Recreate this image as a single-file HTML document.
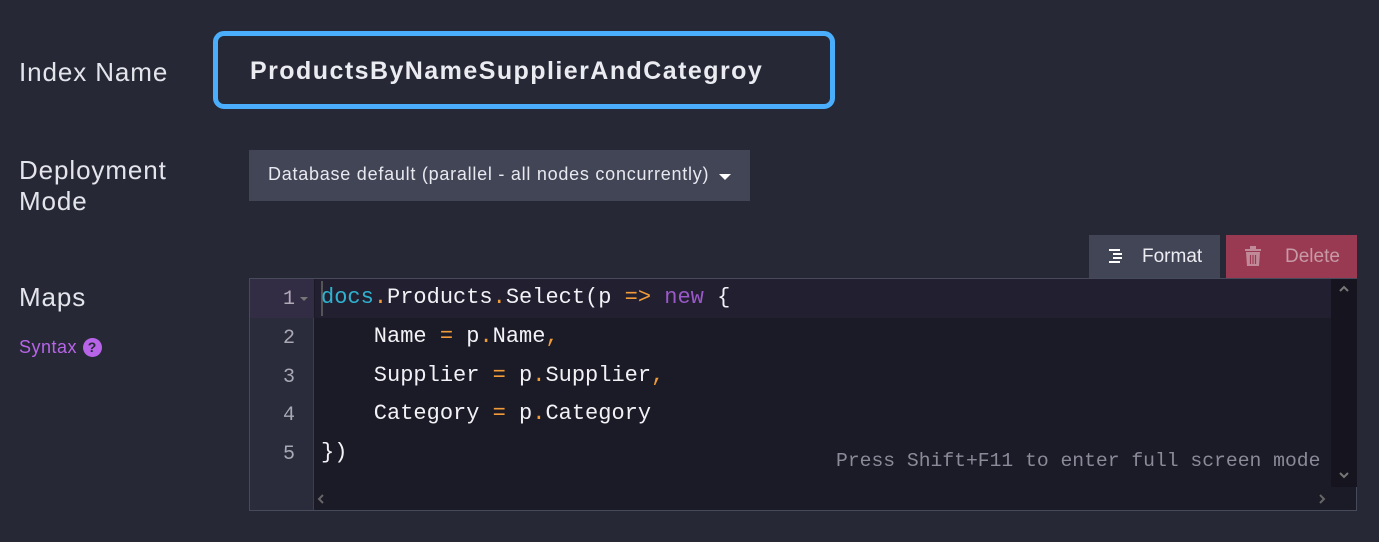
<!DOCTYPE html>
<html><head><meta charset="utf-8"><style>
*{margin:0;padding:0;box-sizing:border-box}
body{width:1379px;height:542px;background:#262935;position:relative;overflow:hidden;font-family:"Liberation Sans",sans-serif;color:#e6e6ee}
.abs{position:absolute;white-space:nowrap}
.lbl{font-size:26px;color:#e4e4ec;letter-spacing:0.9px}
.inp{left:213px;top:31px;width:622px;height:78px;border:5px solid #4aaefc;border-radius:11px;background:#262935}
.inp span{position:absolute;left:32px;top:21px;font-size:25px;font-weight:bold;color:#ebebf2;letter-spacing:1.45px}
.dd{left:249px;top:150px;width:501px;height:51px;background:#424555;font-size:18px;color:#e8e8f0;padding:14px 0 0 19px;letter-spacing:0.75px}
.tri{position:absolute;left:470px;top:24px;width:0;height:0;border-left:6px solid transparent;border-right:6px solid transparent;border-top:6px solid #fff}
.btn{top:235px;height:43px;font-size:19px;padding-top:11px}
.ed{left:249px;top:278px;width:1108px;height:233px;background:#1b1a27;border:1px solid #474a5a}
.gut{position:absolute;left:0;top:0;width:64px;height:100%;background:#2a2b3b;border-right:1px solid #3d3f50}
.ln{position:absolute;left:0;width:45px;text-align:right;font-family:"Liberation Mono",monospace;font-size:20px;color:#a9a9b6}
.code{position:absolute;left:71px;font-family:"Liberation Mono",monospace;font-size:22px;color:#f2f2f6;white-space:pre}
.c{color:#2fb2d0}.o{color:#f19c38}.k{color:#9a58c8}
</style></head><body>
<div class="abs lbl" style="left:19px;top:57px">Index Name</div>
<div class="abs inp"><span>ProductsByNameSupplierAndCategroy</span></div>
<div class="abs lbl" style="left:19px;top:155px;line-height:31px">Deployment<br>Mode</div>
<div class="abs dd">Database default (parallel - all nodes concurrently)<div class="tri"></div></div>
<div class="abs lbl" style="left:19px;top:282px">Maps</div>
<div class="abs" style="left:19px;top:337px;font-size:18px;color:#b764e8;letter-spacing:0.5px">Syntax <span style="display:inline-block;width:19px;height:19px;border-radius:50%;background:#b764e8;color:#262935;font-size:14px;font-weight:bold;text-align:center;line-height:19px;vertical-align:1px;letter-spacing:0">?</span></div>
<div class="abs btn" style="left:1089px;width:131px;background:#424555;color:#ececf2">
 <svg style="position:absolute;left:19px;top:13px" width="16" height="16" viewBox="0 0 16 16"><g stroke="#fff" stroke-width="2"><line x1="1" y1="2" x2="12" y2="2"/><line x1="5" y1="6" x2="14" y2="6"/><line x1="5" y1="10" x2="14" y2="10"/><line x1="1" y1="14" x2="12" y2="14"/></g></svg>
 <span style="position:absolute;left:53px">Format</span></div>
<div class="abs btn" style="left:1226px;width:131px;background:#9a3a52;color:#c79aa6">
 <svg style="position:absolute;left:19px;top:11px" width="16" height="20" viewBox="0 0 16 20"><g fill="#c08a98"><rect x="0" y="3" width="16" height="2"/><rect x="5" y="0" width="6" height="3"/><path d="M1 6h14l-1 14H2z"/></g><g stroke="#9a3a52" stroke-width="1.2"><line x1="5.5" y1="9" x2="5.5" y2="18"/><line x1="8" y1="9" x2="8" y2="18"/><line x1="10.5" y1="9" x2="10.5" y2="18"/></g></svg>
 <span style="position:absolute;left:59px">Delete</span></div>
<div class="abs ed">
 <div class="gut"><div style="position:absolute;left:0;top:0;width:64px;height:39px;background:#332c45"></div></div>
 <div style="position:absolute;left:65px;top:0;width:1016px;height:39px;background:#211f30"></div>
 <div style="position:absolute;left:71px;top:2px;width:2px;height:35px;background:#555"></div>
 <div class="ln" style="top:9px;color:#b0aab8">1</div><div class="abs" style="left:50px;top:18px;border-left:4px solid transparent;border-right:4px solid transparent;border-top:4px solid #777"></div>
 <div class="ln" style="top:48px">2</div>
 <div class="ln" style="top:87px">3</div>
 <div class="ln" style="top:125px">4</div>
 <div class="ln" style="top:164px">5</div>
 <div class="code" style="top:6px"><span class="c">docs</span><span class="o">.</span>Products<span class="o">.</span>Select(p <span class="o">=&gt;</span> <span class="k">new</span> {</div>
 <div class="code" style="top:45px">    Name <span class="o">=</span> p<span class="o">.</span>Name<span class="o">,</span></div>
 <div class="code" style="top:84px">    Supplier <span class="o">=</span> p<span class="o">.</span>Supplier<span class="o">,</span></div>
 <div class="code" style="top:122px">    Category <span class="o">=</span> p<span class="o">.</span>Category</div>
 <div class="code" style="top:161px">})</div>
 <div class="abs" style="left:586px;top:171px;font-family:'Liberation Mono',monospace;font-size:19.7px;color:#8a8a98">Press Shift+F11 to enter full screen mode</div>
 <div style="position:absolute;left:1081px;top:0;width:26px;height:208px;background:#16151f"></div>
 <svg class="abs" style="left:1088px;top:6px" width="12" height="8" viewBox="0 0 12 8"><path d="M2 6l4-4 4 4" stroke="#777" stroke-width="2" fill="none"/></svg>
 <svg class="abs" style="left:1088px;top:192px" width="12" height="8" viewBox="0 0 12 8"><path d="M2 2l4 4 4-4" stroke="#777" stroke-width="2" fill="none"/></svg>
 <svg class="abs" style="left:67px;top:214px" width="8" height="12" viewBox="0 0 8 12"><path d="M6 2l-4 4 4 4" stroke="#666" stroke-width="2" fill="none"/></svg>
 <svg class="abs" style="left:1068px;top:214px" width="8" height="12" viewBox="0 0 8 12"><path d="M2 2l4 4-4 4" stroke="#666" stroke-width="2" fill="none"/></svg>
</div>
</body></html>
